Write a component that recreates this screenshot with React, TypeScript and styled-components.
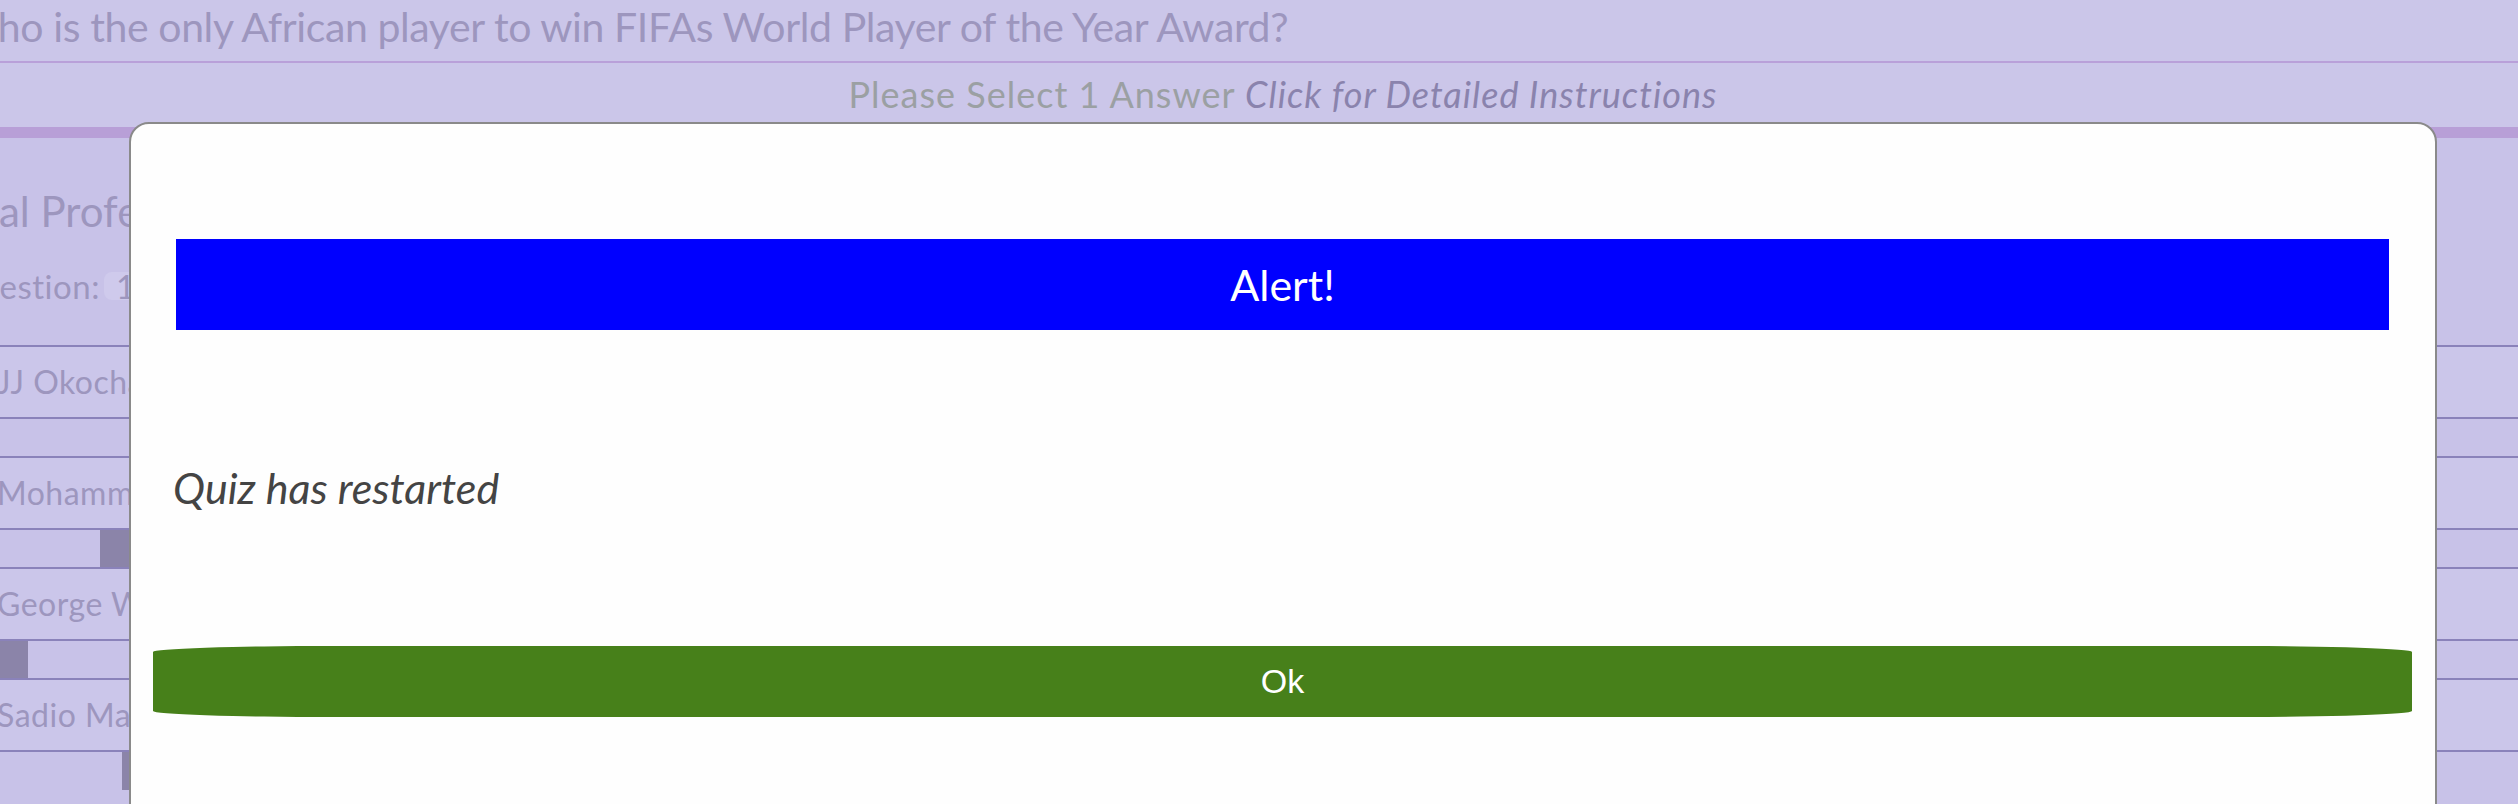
import React from "react";
import styled, { createGlobalStyle } from "styled-components";

const GlobalStyle = createGlobalStyle`
  html, body {
    margin: 0;
    padding: 0;
  }
  body {
    background: #cbc6e9;
    overflow: hidden;
    font-family: Lato, "Open Sans", sans-serif;
  }
`;

const Page = styled.div`
  position: relative;
  width: 2518px;
  height: 804px;
  overflow: hidden;
  background: #cbc6e9;
`;

const QuestionBar = styled.h1`
  margin: 0;
  padding: 0 0 8px;
  font-size: 41px;
  line-height: 53px;
  font-weight: 400;
  letter-spacing: -0.4px;
  color: #9d96be;
  white-space: nowrap;
  text-indent: -44px;
  border-bottom: 2px solid #b9a0d9;
`;

const Instructions = styled.p`
  margin: 0;
  box-sizing: border-box;
  height: 64px;
  padding-left: 48px;
  font-size: 36px;
  line-height: 62px;
  letter-spacing: 1px;
  text-align: center;
  white-space: nowrap;
  color: #9ba0a3;
`;

const InstructionsLink = styled.em`
  color: #8a83ad;
`;

const Band = styled.div`
  height: 11px;
  background: #b89fd7;
`;

const Content = styled.section`
  padding-top: 45px;
  height: 700px;
  background: #c8c2e8;
`;

const QuizTitle = styled.h2`
  margin: 0;
  font-size: 42px;
  line-height: 56px;
  font-weight: 400;
  color: #9d96be;
  white-space: nowrap;
  text-indent: -93px;
`;

const QuestionNumber = styled.div`
  margin-top: 25px;
  font-size: 33px;
  line-height: 44px;
  letter-spacing: 0.5px;
  color: #9d96be;
  white-space: nowrap;
  text-indent: -46px;
`;

const Badge = styled.span`
  display: inline-block;
  margin-left: 4px;
  padding: 0 12px;
  line-height: 28px;
  border-radius: 8px;
  background: #cfcaec;
  text-indent: 0;
`;

const AnswerList = styled.div`
  margin-top: 37px;
  display: flex;
  flex-direction: column;
`;

const AnswerRow = styled.div`
  box-sizing: border-box;
  height: 74px;
  border-top: 2px solid #8a82ba;
  border-bottom: 2px solid #8a82ba;
  background: #cbc6ea;
  font-size: 32px;
  line-height: 70px;
  letter-spacing: 0.5px;
  color: #9d96be;
  white-space: nowrap;
  text-indent: -3px;
`;

const RowGap = styled.div<{ $from?: number; $to?: number; $tall?: boolean }>`
  height: ${(p) => (p.$tall ? 38 : 37)}px;
  background: ${(p) =>
    p.$from === undefined
      ? "#c8c2e8"
      : `linear-gradient(to right, #c8c2e8 ${p.$from}px, #8b84a9 ${p.$from}px, #8b84a9 ${p.$to}px, #c8c2e8 ${p.$to}px)`};
`;

const Overlay = styled.div`
  position: absolute;
  left: 129px;
  top: 122px;
  width: 2308px;
  height: 720px;
  box-sizing: border-box;
  border: 2px solid #8a8a8a;
  border-radius: 20px;
  background: #fefefe;
  display: flex;
  flex-direction: column;
`;

const AlertHeader = styled.div`
  margin: 115px 46px 0 45px;
  height: 91px;
  background: #0000ff;
  color: #ffffff;
  font-size: 43px;
  line-height: 91px;
  text-align: center;
`;

const Message = styled.p`
  margin: 128px 0 0;
  padding-left: 42px;
  font-size: 43px;
  line-height: 60px;
  font-style: italic;
  color: #444444;
`;

const OkButton = styled.button`
  margin: 128px 23px 0 22px;
  height: 71px;
  border: none;
  border-radius: 180px / 6px;
  background: #47801a;
  color: #ffffff;
  font-family: "Liberation Sans", Arial, sans-serif;
  font-size: 34px;
  cursor: pointer;
`;

const answers = ["JJ Okocha", "Mohammed Salah", "George Weah", "Sadio Mane"];
const gaps: { from?: number; to?: number; tall?: boolean }[] = [
  {},
  { from: 100, to: 300 },
  { from: 0, to: 28 },
  { from: 122, to: 300, tall: true },
];

export default function App() {
  return (
    <>
      <GlobalStyle />
      <Page>
        <QuestionBar>
          Who is the only African player to win FIFAs World Player of the Year Award?
        </QuestionBar>
        <Instructions>
          Please Select 1 Answer <InstructionsLink>Click for Detailed Instructions</InstructionsLink>
        </Instructions>
        <Band />
        <Content>
          <QuizTitle>Ethical Professional Football Quiz</QuizTitle>
          <QuestionNumber>
            Question:<Badge>1</Badge>
          </QuestionNumber>
          <AnswerList>
            {answers.map((a, i) => (
              <React.Fragment key={a}>
                <AnswerRow>{a}</AnswerRow>
                <RowGap $from={gaps[i].from} $to={gaps[i].to} $tall={gaps[i].tall} />
              </React.Fragment>
            ))}
          </AnswerList>
        </Content>
        <Overlay role="dialog" aria-label="Alert">
          <AlertHeader>Alert!</AlertHeader>
          <Message>Quiz has restarted</Message>
          <OkButton>Ok</OkButton>
        </Overlay>
      </Page>
    </>
  );
}
